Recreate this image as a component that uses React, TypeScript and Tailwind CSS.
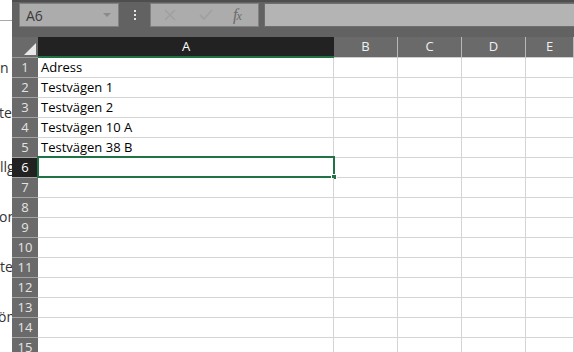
import React from 'react';

const cells = ['Adress', 'Testvägen 1', 'Testvägen 2', 'Testvägen 10 A', 'Testvägen 38 B'];
const rows = Array.from({ length: 15 }, (_, i) => i + 1);

// other columns after A
const otherCols = [
  { label: 'B', w: 'w-[64px]' },
  { label: 'C', w: 'w-[64px]' },
  { label: 'D', w: 'w-[64px]' },
  { label: 'E', w: 'flex-1' },
];

function LeftStrip() {
  // bits of the document window that sits behind Excel
  return (
    <div className="w-[12px] shrink-0 overflow-hidden bg-white flex flex-col text-[14px] leading-[16px] text-[#333] whitespace-nowrap font-['Open_Sans',sans-serif]">
      <div className="h-[21px] shrink-0 border-b border-[#a8a8a8]" />
      <div className="mt-[39px] h-[16px]">n</div>
      <div className="mt-[29px] h-[16px] -ml-[1px]">ter</div>
      <div className="mt-[38px] h-[16px]">llg</div>
      <div className="mt-[34px] h-[16px] -ml-[1px]">on</div>
      <div className="mt-[34px] h-[16px]">te</div>
      <div className="mt-[34px] h-[16px] -ml-[2px]">öm</div>
    </div>
  );
}

function FormulaBar() {
  return (
    <div className="h-[37px] shrink-0 flex items-start pt-[1px] border-t-[2px] border-[#4e4e4e]">
      {/* Name box */}
      <div className="ml-[7px] w-[100px] h-[24px] bg-[#acacac] border border-[#808080] flex items-center justify-between pl-[6px] pr-[7px]">
        <span className="text-[14px] text-[#3a3a3a]">A6</span>
        <svg width="8" height="5" viewBox="0 0 8 5">
          <path d="M0 0 L8 0 L4 4 Z" fill="#8a8a8a" />
        </svg>
      </div>
      {/* drag dots */}
      <div className="w-[31px] h-[24px] flex flex-col items-center justify-center gap-[2px]">
        <span className="w-[2px] h-[2px] bg-[#e6e6e6]" />
        <span className="w-[2px] h-[2px] bg-[#e6e6e6]" />
        <span className="w-[2px] h-[2px] bg-[#e6e6e6]" />
      </div>
      {/* cancel / enter / fx */}
      <div className="w-[109px] h-[24px] bg-[#acacac] border border-[#808080] flex items-center">
        <svg className="ml-[13px]" width="12" height="12" viewBox="0 0 12 12">
          <path d="M1 1 L11 11 M11 1 L1 11" stroke="#a0a0a0" strokeWidth="1.6" />
        </svg>
        <svg className="ml-[23px]" width="14" height="12" viewBox="0 0 14 12">
          <path d="M1 6 L5 10 L13 1" stroke="#a0a0a0" strokeWidth="1.8" fill="none" />
        </svg>
        <span className="ml-[20px] text-[16px] leading-none italic text-[#6a6a6a] font-['Liberation_Serif',serif] tracking-[-1px]">
          f<span className="text-[12px]">x</span>
        </span>
      </div>
      {/* formula input */}
      <div className="ml-[5px] flex-1 h-[24px] bg-[#b4b4b4] border-y border-l border-[#6e6e6e]" />
    </div>
  );
}

export default function App() {
  return (
    <div className="w-[574px] h-[352px] flex overflow-hidden bg-white font-['Open_Sans',sans-serif]">
      <LeftStrip />
      <div className="flex-1 flex flex-col bg-[#626262] overflow-hidden">
        <FormulaBar />

        {/* Column headers */}
        <div className="h-[21px] shrink-0 flex">
          <div className="w-[26px] shrink-0 bg-[#6a6a6a] border-b border-[#9a9a9a] flex items-end justify-end pr-[2px] pb-[2px]">
            <svg width="12" height="12" viewBox="0 0 12 12">
              <path d="M12 0 L12 12 L0 12 Z" fill="#e8e8e8" />
            </svg>
          </div>
          <div className="w-[296px] shrink-0 bg-[#222222] border-b-2 border-[#217346] flex items-center justify-center text-[13px] text-white">
            A
          </div>
          {otherCols.map((c) => (
            <div
              key={c.label}
              className={`${c.w} shrink-0 bg-[#6a6a6a] border-r border-b border-r-[#b8b8b8] border-b-[#cfcfcf] flex items-center justify-center text-[13px] text-[#f0f0f0]`}
            >
              {c.label}
            </div>
          ))}
        </div>

        {/* Grid rows */}
        {rows.map((r) => {
          const selected = r === 6;
          return (
            <div key={r} className="h-[20px] shrink-0 flex">
              <div
                className={`w-[26px] shrink-0 border-b border-[#a4a4a4] flex items-center justify-center text-[13px] ${
                  selected ? 'bg-[#222222] text-white' : 'bg-[#6a6a6a] text-[#e4e4e4]'
                }`}
              >
                {r}
              </div>
              <div className="w-[296px] shrink-0 bg-white border-r border-b border-[#d4d4d4] relative flex items-center pl-[3px] text-[13px] text-black whitespace-nowrap">
                {cells[r - 1] ?? ''}
                {selected && (
                  <div className="absolute -top-[2px] -left-[1px] -right-[2px] -bottom-[1px] border-2 border-[#217346]">
                    <span className="absolute -right-[4px] -bottom-[4px] w-[6px] h-[6px] bg-[#217346] border border-white" />
                  </div>
                )}
              </div>
              {otherCols.map((c) => (
                <div key={c.label} className={`${c.w} shrink-0 bg-white border-r border-b border-[#d4d4d4]`} />
              ))}
            </div>
          );
        })}
      </div>
    </div>
  );
}
